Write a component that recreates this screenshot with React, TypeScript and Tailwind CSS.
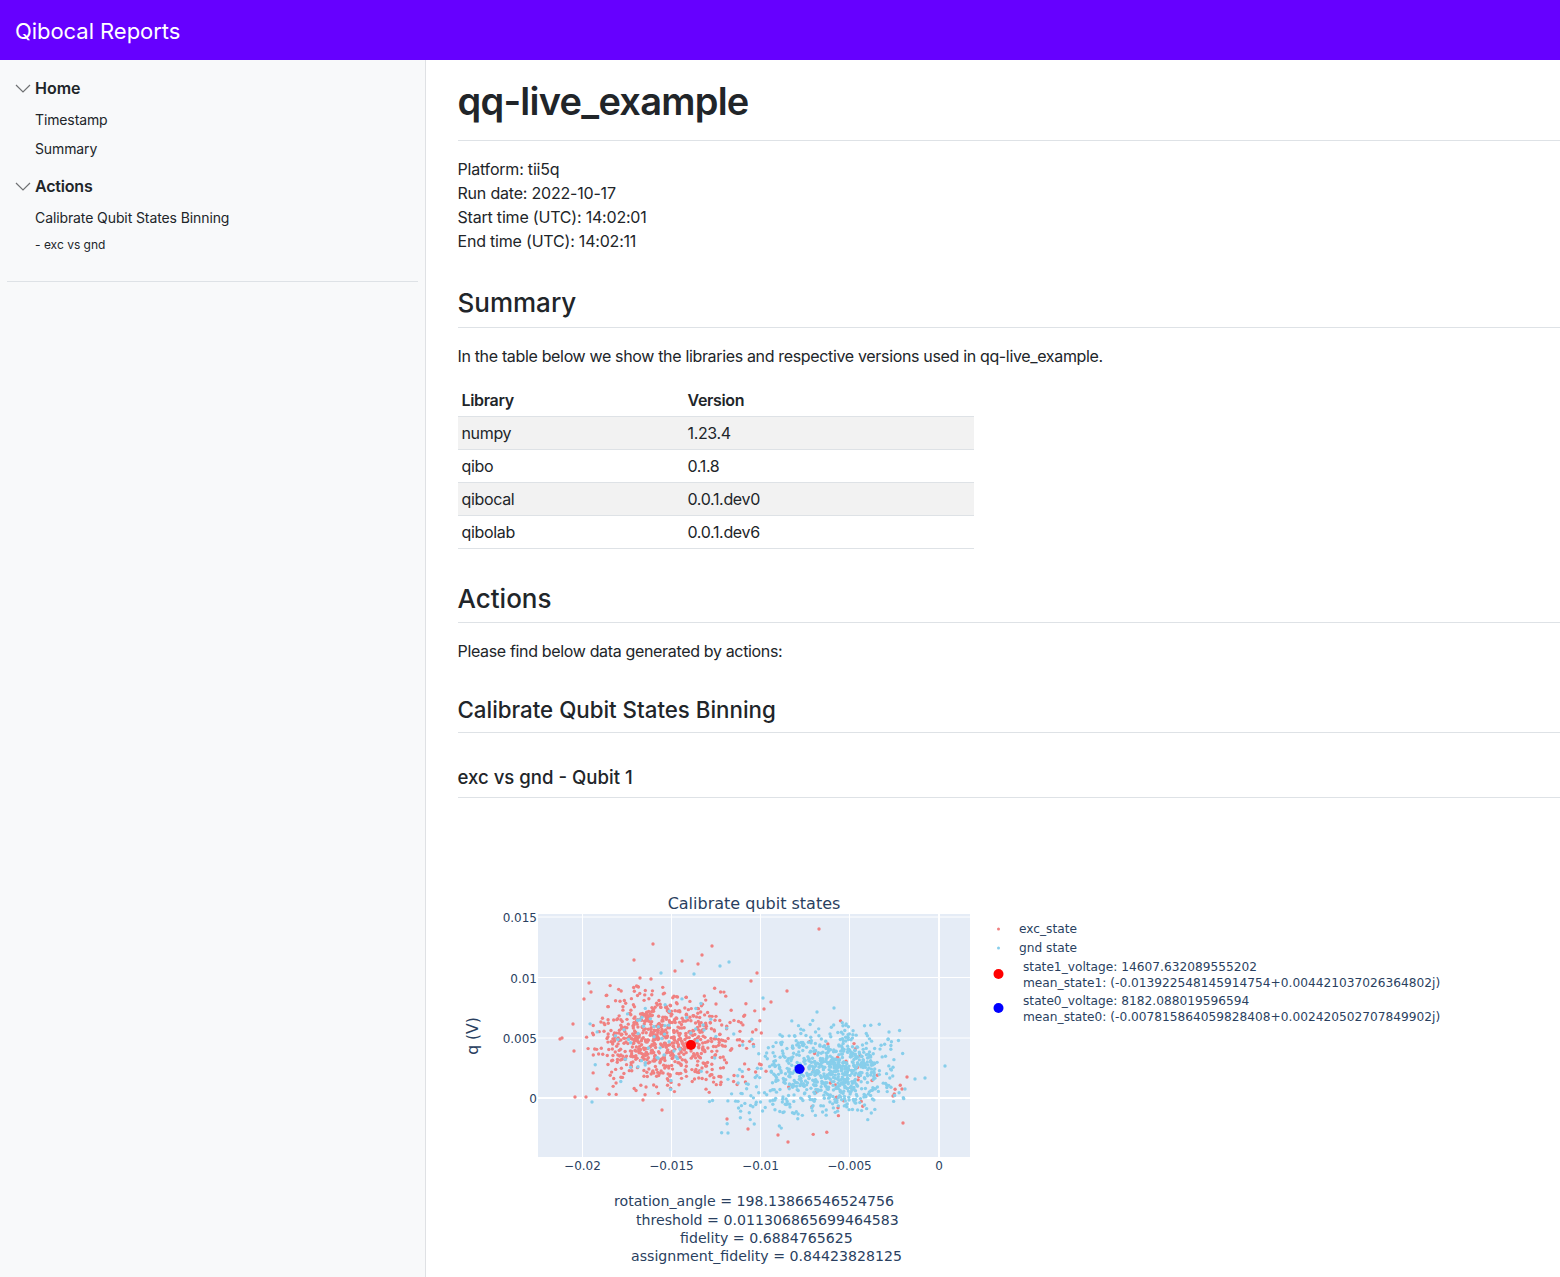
import { useMemo } from "react";

// small seeded rng so the scatter is the same on every render
function makeRng(seed: number) {
  let s = seed;
  const next = () => {
    s = (s + 0x6d2b79f5) | 0;
    let t = Math.imul(s ^ (s >>> 15), 1 | s);
    t = (t + Math.imul(t ^ (t >>> 7), 61 | t)) ^ t;
    return ((t ^ (t >>> 14)) >>> 0) / 4294967296;
  };
  return () => {
    const u = Math.max(next(), 1e-6);
    return Math.sqrt(-2 * Math.log(u)) * Math.cos(2 * Math.PI * next());
  };
}

type Pt = [number, number];

function cloud(seed: number, n: number, cx: number, cy: number, sx: number, sy: number): Pt[] {
  const g = makeRng(seed);
  const pts: Pt[] = [];
  while (pts.length < n) {
    const x = cx + g() * sx;
    const y = cy + g() * sy;
    if (Math.abs(x - cx) < sx * 2.3 && Math.abs(y - cy) < sy * 2.3) pts.push([x, y]);
  }
  return pts;
}

// outliers read off the reference, in page pixels
const redOutliers: Pt[] = [
  [819, 929], [653, 944], [712, 946], [702, 955], [634, 960], [682, 961], [698, 964], [675, 971],
  [757, 973], [751, 981], [640, 978], [651, 979], [589, 983], [591, 992], [584, 999], [787, 991],
  [771, 1002], [764, 1009], [573, 1024], [562, 1038], [560, 1039], [574, 1051], [575, 1097], [586, 1097],
  [597, 1089], [643, 1100], [662, 1110], [727, 1119], [748, 1129], [778, 1135], [788, 1142], [903, 1123],
  [907, 1077], [902, 1089], [893, 1096],
];
const blueOutliers: Pt[] = [
  [945, 1066], [925, 1078], [915, 1079], [905, 1089], [720, 966], [729, 962], [661, 973], [694, 974],
  [592, 1102], [728, 1133], [817, 1012], [834, 1008], [763, 998], [889, 1032], [640, 1020], [704, 1030],
];

const xTicks: [number, string][] = [
  [582.5, "−0.02"], [671.5, "−0.015"], [760.5, "−0.01"], [849.5, "−0.005"], [939, "0"],
];
const yTicks: [number, string][] = [
  [917, "0.015"], [977.5, "0.01"], [1038, "0.005"], [1098, "0"],
];

function QubitChart() {
  const red = useMemo(
    () => [
      ...cloud(11, 620, 655, 1040, 30, 24),
      ...cloud(12, 130, 715, 1046, 24, 24),
      ...cloud(13, 35, 835, 1075, 32, 27),
      ...redOutliers,
    ],
    [],
  );
  const blue = useMemo(
    () => [
      ...cloud(21, 640, 838, 1071, 29, 22),
      ...cloud(22, 130, 778, 1078, 24, 24),
      ...cloud(24, 55, 655, 1038, 32, 25),
      ...cloud(23, 25, 735, 1100, 16, 16),
      ...blueOutliers,
    ],
    [],
  );

  return (
    <svg
      width="1102"
      height="397"
      viewBox="458 880 1102 397"
      className="block font-['DejaVu_Sans',sans-serif] tracking-normal fill-[#2a3f5f]"
    >
      <text x="754" y="909" textAnchor="middle" fontSize="16">Calibrate qubit states</text>

      <rect x="538" y="914" width="432" height="243" fill="#e5ecf6" />
      {xTicks.map(([x]) => (
        <line key={x} x1={x} x2={x} y1="914" y2="1157" stroke="#fff" strokeWidth="1" />
      ))}
      {yTicks.map(([y]) => (
        <line key={y} x1="538" x2="970" y1={y} y2={y} stroke="#fff" strokeWidth="1" />
      ))}
      <line x1="538" x2="970" y1="1098" y2="1098" stroke="#fff" strokeWidth="2" />
      <line x1="939" x2="939" y1="914" y2="1157" stroke="#fff" strokeWidth="2" />

      {red.map(([x, y], i) => (
        <circle key={i} cx={x} cy={y} r="1.7" fill="#f08080" />
      ))}
      {blue.map(([x, y], i) => (
        <circle key={i} cx={x} cy={y} r="1.7" fill="#87ceeb" />
      ))}
      <circle cx="691" cy="1045" r="5" fill="#ff0000" />
      <circle cx="799.5" cy="1069" r="5" fill="#0000ff" />

      {xTicks.map(([x, label]) => (
        <text key={label} x={x} y="1170" textAnchor="middle" fontSize="12">{label}</text>
      ))}
      {yTicks.map(([y, label]) => (
        <text key={label} x="537" y={y + 5} textAnchor="end" fontSize="12">{label}</text>
      ))}
      <text x="478" y="1036" textAnchor="middle" fontSize="15.5" transform="rotate(-90 478 1036)">q (V)</text>

      {/* legend */}
      <circle cx="998.5" cy="929" r="1.5" fill="#f08080" />
      <circle cx="998.5" cy="948" r="1.5" fill="#87ceeb" />
      <circle cx="998.5" cy="974" r="5" fill="#ff0000" />
      <circle cx="998.5" cy="1008" r="5" fill="#0000ff" />
      <g fontSize="12.2">
        <text x="1019" y="933">exc_state</text>
        <text x="1019" y="952">gnd state</text>
        <text x="1023" y="971">state1_voltage: 14607.632089555202</text>
        <text x="1023" y="987">mean_state1: (-0.013922548145914754+0.004421037026364802j)</text>
        <text x="1023" y="1005">state0_voltage: 8182.088019596594</text>
        <text x="1023" y="1021">mean_state0: (-0.007815864059828408+0.002420502707849902j)</text>
      </g>

      {/* annotation under the plot */}
      <g fontSize="14.15">
        <text x="614" y="1206">rotation_angle = 198.13866546524756</text>
        <text x="636" y="1225">threshold = 0.011306865699464583</text>
        <text x="680" y="1243">fidelity = 0.6884765625</text>
        <text x="631" y="1261">assignment_fidelity = 0.84423828125</text>
      </g>
    </svg>
  );
}

const versions = [
  ["numpy", "1.23.4"],
  ["qibo", "0.1.8"],
  ["qibocal", "0.0.1.dev0"],
  ["qibolab", "0.0.1.dev6"],
];

function Chevron() {
  return (
    <svg width="16" height="16" viewBox="0 0 16 16" fill="none" stroke="#6f7173" strokeWidth="1.2" className="shrink-0">
      <path d="M1 5l7 7 7-7" />
    </svg>
  );
}

export default function App() {
  return (
    <div className="flex h-[1277px] flex-col overflow-hidden bg-white font-['Inter',sans-serif] text-[#212529]">
      {/* Header */}
      <header className="flex h-[60px] shrink-0 items-center bg-[#6600ff] pt-[2px] pl-[15px] text-[22px] tracking-[-0.05px] text-white">
        Qibocal Reports
      </header>

      <div className="flex min-h-0 flex-1">
        {/* Sidebar */}
        <aside className="w-[426px] shrink-0 border-r border-[#dfe1e4] bg-[#f8f9fa] px-[7px] pt-4">
          <div className="flex h-6 items-center gap-[4px] pl-[8px] font-semibold">
            <Chevron />
            <span>Home</span>
          </div>
          <div className="mt-[5px] pl-[28px] text-sm tracking-[-0.12px]">
            <p className="h-[29px] leading-[29px]">Timestamp</p>
            <p className="h-[29px] leading-[29px]">Summary</p>
          </div>
          <div className="mt-[11px] flex h-6 items-center gap-[4px] pl-[8px] font-semibold tracking-[-0.2px]">
            <Chevron />
            <span>Actions</span>
          </div>
          <div className="mt-[5px] pl-[28px]">
            <p className="h-[29px] text-sm leading-[29px] tracking-[-0.1px]">Calibrate Qubit States Binning</p>
            <p className="h-[25px] text-xs leading-[25px]">- exc vs gnd</p>
          </div>
          <div className="mt-[24px] border-t border-[#dee2e6]" />
        </aside>

        {/* Main */}
        <main className="min-w-0 flex-1 pl-[31.5px] pt-4 text-base leading-6 tracking-[-0.34px]">
          <h1 className="border-b border-[#dee2e6] pb-[14px] text-[38px] leading-[50px] font-semibold tracking-[-0.75px]">
            qq-live_example
          </h1>
          <div className="mt-4 tracking-[-0.2px]">
            <p>Platform: tii5q</p>
            <p>Run date: 2022-10-17</p>
            <p>Start time (UTC): 14:02:01</p>
            <p>End time (UTC): 14:02:11</p>
          </div>

          <h2 className="mt-[33px] border-b border-[#dee2e6] pb-[8px] text-[26px] leading-[33px] font-medium tracking-normal">Summary</h2>
          <p className="mt-4">In the table below we show the libraries and respective versions used in qq-live_example.</p>

          <table className="mt-4 w-[516px] border-collapse">
            <thead>
              <tr className="h-[32px] border-b border-[#dee2e6] text-left">
                <th className="w-[226px] px-1 font-semibold">Library</th>
                <th className="px-1 font-semibold">Version</th>
              </tr>
            </thead>
            <tbody>
              {versions.map(([lib, ver], i) => (
                <tr key={lib} className={`h-[33px] border-b border-[#dee2e6] ${i % 2 === 0 ? "bg-[#f2f2f2]" : ""}`}>
                  <td className="px-1">{lib}</td>
                  <td className="px-1">{ver}</td>
                </tr>
              ))}
            </tbody>
          </table>

          <h2 className="mt-[33px] border-b border-[#dee2e6] pb-[7px] text-[26px] leading-[33px] font-medium tracking-normal">Actions</h2>
          <p className="mt-4">Please find below data generated by actions:</p>

          <h3 className="mt-[33px] border-b border-[#dee2e6] pb-[8px] text-[22.3px] leading-[28px] font-medium tracking-normal">
            Calibrate Qubit States Binning
          </h3>
          <h4 className="mt-[32px] border-b border-[#dee2e6] pb-[8px] text-[18.6px] leading-[24px] font-medium tracking-normal">exc vs gnd - Qubit 1</h4>

          <div className="mt-[82px]">
            <QubitChart />
          </div>
        </main>
      </div>
    </div>
  );
}
